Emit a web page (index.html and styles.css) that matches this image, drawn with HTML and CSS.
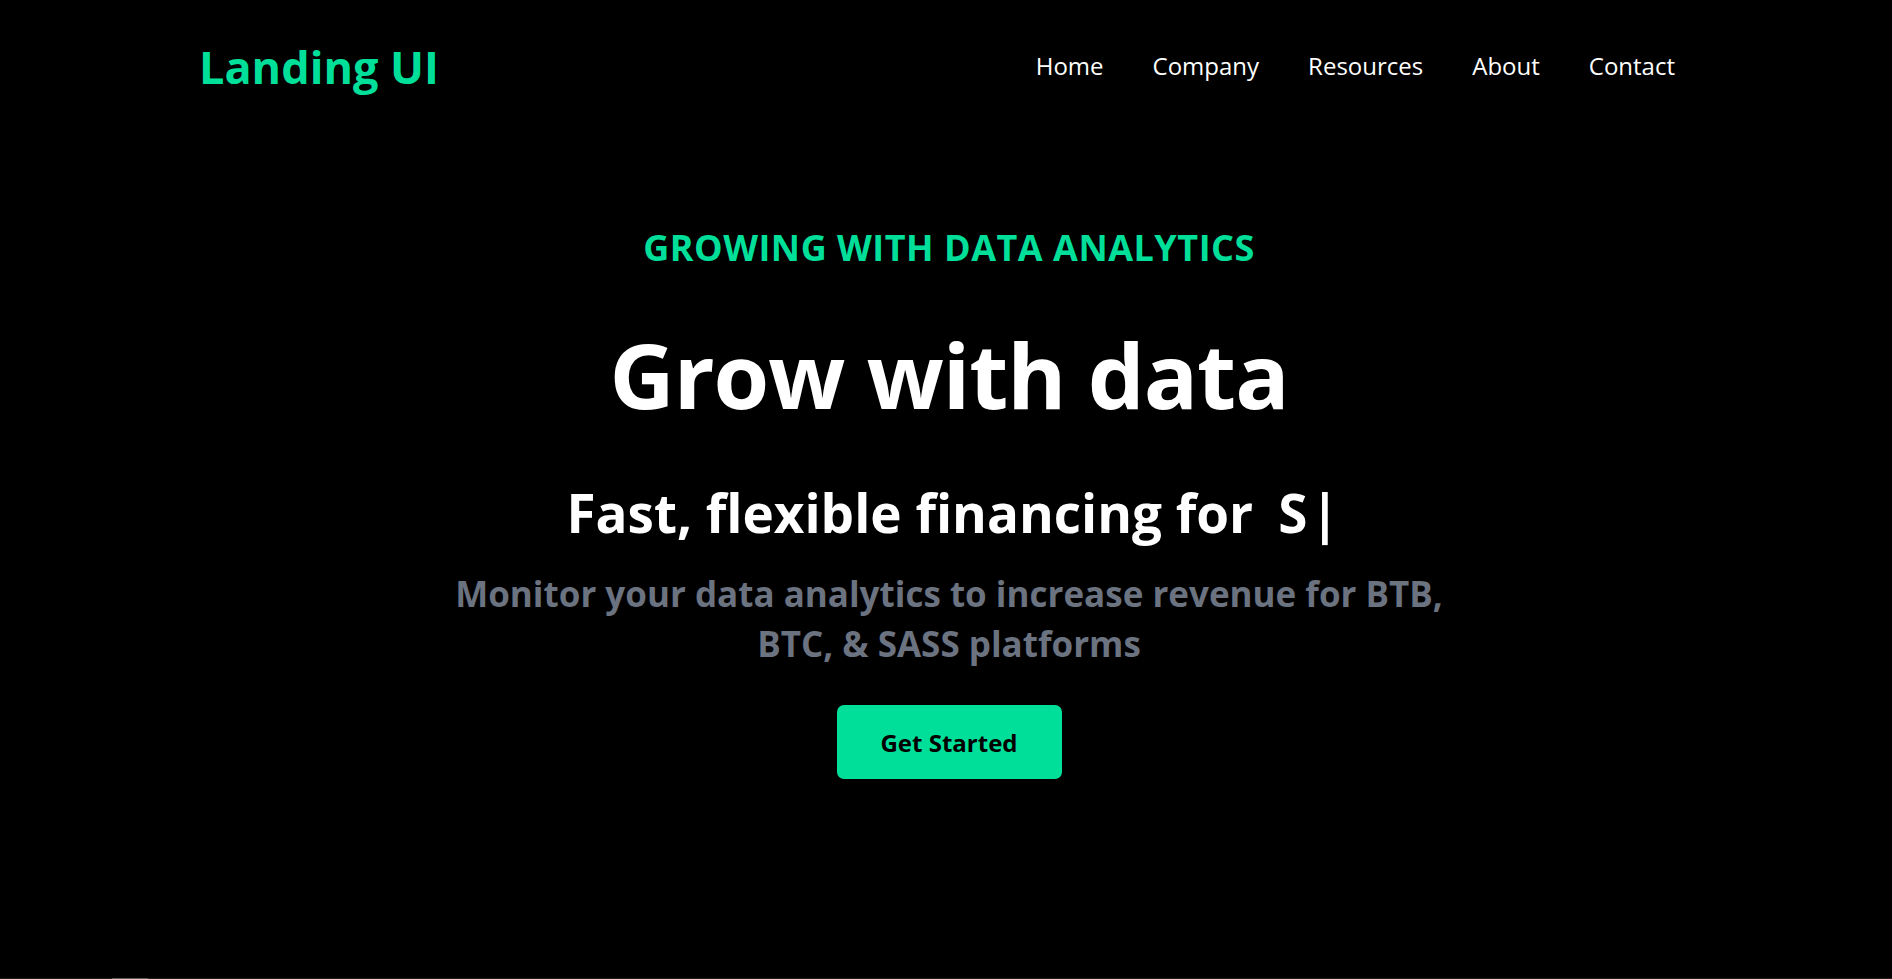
FILE: index.html
```html
<!DOCTYPE html>
<html lang="en">
<head>
<meta charset="utf-8">
<title>Landing UI</title>
<link rel="stylesheet" href="styles.css">
</head>
<body>
<div class="page">
  <header class="nav">
    <h1 class="logo">Landing UI</h1>
    <ul class="menu">
      <li>Home</li>
      <li>Company</li>
      <li>Resources</li>
      <li>About</li>
      <li>Contact</li>
    </ul>
  </header>
  <main class="hero">
    <p class="eyebrow">GROWING WITH DATA ANALYTICS</p>
    <h1 class="title">Grow with data</h1>
    <div class="tagline">
      <p class="tagline-text">Fast, flexible financing for</p>
      <span class="typed">S</span><span class="cursor">|</span>
    </div>
    <p class="lead">Monitor your data analytics to increase revenue for BTB, BTC, &amp; SASS platforms</p>
    <button class="cta">Get Started</button>
  </main>
  <div class="track"><div class="thumb"></div></div>
</div>
</body>
</html>
```
FILE: styles.css
```css
* { box-sizing: border-box; }
html, body { margin: 0; padding: 0; background: #000; }
body {
  font-family: "Open Sans", "Noto Sans", sans-serif;
  color: #fff;
}
.page {
  height: 100vh;
  display: flex;
  flex-direction: column;
  overflow: hidden;
}
.nav {
  height: 132px;
  flex: none;
  display: flex;
  justify-content: space-between;
  align-items: center;
  padding: 0 217px 0 199px;
}
.logo {
  margin: 0;
  font-size: 45px;
  line-height: 1;
  font-weight: 700;
  color: #00df9a;
}
.menu {
  list-style: none;
  margin: 0;
  padding: 0;
  display: flex;
  gap: 49px;
  font-size: 24px;
  line-height: 1;
}
.hero {
  flex: 1;
  display: flex;
  flex-direction: column;
  align-items: center;
  text-align: center;
  padding-top: 98px;
  padding-left: 6px;
}
.eyebrow {
  margin: 0;
  font-size: 36px;
  line-height: 1;
  font-weight: 700;
  letter-spacing: 0.5px;
  color: #00df9a;
}
.title {
  margin: 63px 0 0;
  font-size: 90px;
  line-height: 1;
  font-weight: 700;
  letter-spacing: -1px;
}
.tagline {
  margin-top: 67px;
  padding-left: 8px;
  display: flex;
  align-items: center;
  justify-content: center;
  font-size: 53px;
  line-height: 1;
  font-weight: 700;
}
.tagline-text { margin: 0; }
.typed { padding-left: 25px; }
.cursor { padding-left: 3px; }
.lead {
  margin: 30px 0 0;
  max-width: 1010px;
  font-size: 35px;
  line-height: 50px;
  font-weight: 700;
  color: #6b7280;
}
.cta {
  margin-top: 36px;
  width: 225px;
  height: 74px;
  border: 0;
  border-radius: 7px;
  background: #00df9a;
  color: #000;
  font-family: inherit;
  font-size: 24px;
  font-weight: 700;
  cursor: pointer;
}
.track {
  flex: none;
  height: 1px;
  background: #1e1e1e;
  display: flex;
}
.thumb {
  margin-left: 112px;
  width: 36px;
  background: #5a5a5a;
}
```
